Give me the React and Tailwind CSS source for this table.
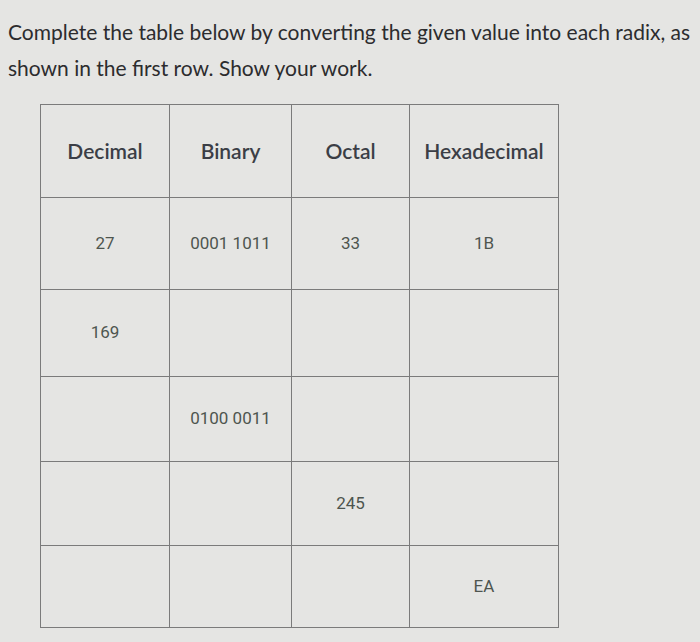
import React from 'react';

const headers = ['Decimal', 'Binary', 'Octal', 'Hexadecimal'];

const rows = [
  { h: 'h-[92px]', cells: ['27', '0001 1011', '33', '1B'] },
  { h: 'h-[87px]', cells: ['169', '', '', ''] },
  { h: 'h-[85px]', cells: ['', '0100 0011', '', ''] },
  { h: 'h-[84px]', cells: ['', '', '245', ''] },
  { h: 'h-[82px]', cells: ['', '', '', 'EA'] },
];

const colWidths = ['w-[129px]', 'w-[122px]', 'w-[118px]', 'w-[149px]'];

const App = () => {
  return (
    <div className="w-[700px] h-[642px] overflow-hidden bg-[#e5e5e3] font-['Lato','Liberation_Sans',sans-serif]">
      <p className="pl-[8px] pt-[14px] pr-[4px] text-[21px] leading-[36px] text-[#2c2c2e]">
        Complete the table below by converting the given value into each radix, as shown in the first row. Show your work.
      </p>

      <table className="ml-[40px] mt-[18px] border-collapse">
        <thead>
          <tr className="h-[93px]">
            {headers.map((h, i) => (
              <th
                key={h}
                className={`${colWidths[i]} border-[1.5px] border-[#7b7b7b] text-center align-middle text-[21px] font-semibold text-[#3b3e46]`}
              >
                {h}
              </th>
            ))}
          </tr>
        </thead>
        <tbody>
          {rows.map((row, r) => (
            <tr key={r} className={row.h}>
              {row.cells.map((c, i) => (
                <td
                  key={i}
                  className="border-[1.5px] border-[#7b7b7b] text-center align-middle text-[17px] text-[#4e554f] font-['Roboto','Liberation_Sans',sans-serif]"
                >
                  {c}
                </td>
              ))}
            </tr>
          ))}
        </tbody>
      </table>
    </div>
  );
};

export default App;
